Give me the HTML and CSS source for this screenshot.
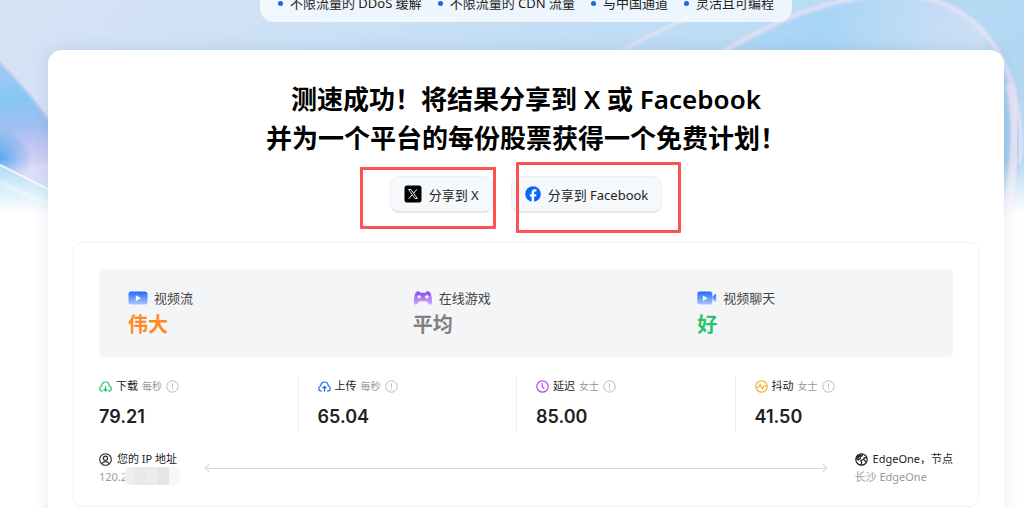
FILE: index.html
```html
<!DOCTYPE html>
<html lang="zh-CN">
<head>
  <meta charset="UTF-8" />
  <title>EdgeOne 测速</title>
  <meta name="viewport" content="width=device-width, initial-scale=1.0" />
  <link rel="stylesheet" href="styles.css">
</head>
<body>
  <div class="page">
    <svg class="hero-bg" viewBox="0 0 1024 220" preserveAspectRatio="none" aria-hidden="true">
      <defs>
        <linearGradient id="sky" x1="0" y1="0" x2="1" y2="0.2">
          <stop offset="0" stop-color="#d8e3f5" />
          <stop offset="0.35" stop-color="#cae0f5" />
          <stop offset="0.7" stop-color="#bddcf4" />
          <stop offset="1" stop-color="#b3d7f3" />
        </linearGradient>
        <linearGradient id="petal" x1="0" y1="60" x2="14" y2="190" gradientUnits="userSpaceOnUse">
          <stop offset="0" stop-color="#a9c8f3" />
          <stop offset="0.3" stop-color="#86c8f3" />
          <stop offset="0.52" stop-color="#a0bff2" />
          <stop offset="0.7" stop-color="#c6c8f3" />
          <stop offset="0.85" stop-color="#d9d6f4" />
          <stop offset="1" stop-color="#b5c8f3" />
        </linearGradient>
        <radialGradient id="glow" cx="0" cy="158" r="32" gradientUnits="userSpaceOnUse">
          <stop offset="0" stop-color="#5aaaee" />
          <stop offset="1" stop-color="#5aaaee" stop-opacity="0" />
        </radialGradient>
        <linearGradient id="arch" x1="720" y1="0" x2="1020" y2="60" gradientUnits="userSpaceOnUse">
          <stop offset="0" stop-color="#b2d8f5" />
          <stop offset="0.35" stop-color="#a8d5f5" />
          <stop offset="0.7" stop-color="#c4ddf5" />
          <stop offset="0.86" stop-color="#cddff5" />
          <stop offset="1" stop-color="#9fcdf1" />
        </linearGradient>
        <linearGradient id="fade" x1="0" y1="0" x2="0" y2="1">
          <stop offset="0" stop-color="#fff" stop-opacity="0" />
          <stop offset="0.9" stop-color="#fff" />
        </linearGradient>
        <filter id="soft" x="-20%" y="-20%" width="140%" height="140%">
          <feGaussianBlur stdDeviation="1.5" />
        </filter>
      </defs>
      <rect width="1024" height="220" fill="url(#sky)" />
      <path d="M0 60C16 76 34 96 60 132V196L0 166Z" fill="url(#petal)" />
      <path d="M0 120L60 180V196L0 166Z" fill="url(#glow)" />
      <path d="M0 60C16 76 34 96 60 132" fill="none" stroke="#e6def3" stroke-width="3" filter="url(#soft)" />
      <path d="M0 166L60 196V220H0Z" fill="#a9d9f6" />
      <path d="M0 165L60 195" stroke="#f3eef9" stroke-width="2" />
      <path d="M0 182L60 210" stroke="#d5effa" stroke-width="3" filter="url(#soft)" />
      <path d="M620 52C660 28 700 12 760 -8" fill="none" stroke="#e2e3f5" stroke-width="3" filter="url(#soft)" />
      <path d="M700 66C760 28 820 -3 892 -5C960 -5 990 32 1005 66C1018 98 1024 140 1019 164C1014 190 1012 205 1010 220H700Z" fill="url(#arch)" />
      <path d="M1010 84C1018 120 1016 160 1006 220" fill="none" stroke="#e3e2f6" stroke-width="9" filter="url(#soft)" />
      <path d="M700 66C760 28 820 -3 892 -5C960 -5 990 32 1005 66C1018 98 1024 140 1019 164" fill="none" stroke="#e6e1f4" stroke-width="4" filter="url(#soft)" />
      <rect y="160" width="1024" height="60" fill="url(#fade)" />
    </svg>

    <ul class="features">
      <li>不限流量的 DDoS 缓解</li>
      <li>不限流量的 CDN 流量</li>
      <li>与中国通道</li>
      <li>灵活且可编程</li>
    </ul>

    <main class="card">
      <h1>测速成功！将结果分享到 X 或 Facebook<br>并为一个平台的每份股票获得一个免费计划！</h1>

      <div class="share">
        <div class="share-item">
          <button type="button">
            <svg width="18" height="18" viewBox="0 0 18 18" aria-hidden="true">
              <rect x="0.5" y="0.5" width="17" height="17" rx="2.5" fill="#000" />
              <path d="M4.6 4.5H7L13.4 13.5H11Z" fill="none" stroke="#fff" stroke-width="0.9" />
              <path d="M13 4.3L9.7 8.1M8.2 9.8L4.8 13.7" stroke="#fff" stroke-width="1" />
            </svg>
            分享到 X
          </button>
          <span class="mark mark-x"></span>
        </div>
        <div class="share-item">
          <button type="button">
            <svg width="16" height="16" viewBox="0 0 16 16" aria-hidden="true">
              <circle cx="8" cy="8" r="7.8" fill="#0866ff" />
              <path d="M6.6 15.9V10.6H4.9V8.2H6.6V6.9C6.6 4.4 7.8 3.3 9.9 3.3C10.5 3.3 11.1 3.4 11.4 3.5V5.6H10.3C9.4 5.6 9.1 6 9.1 6.9V8.2H11.4L11 10.6H9.1V15.9Z" fill="#fff" />
            </svg>
            分享到 Facebook
          </button>
          <span class="mark mark-facebook"></span>
        </div>
      </div>

      <section class="panel">
        <div class="quality">
          <div>
            <div class="quality-name">
              <svg width="20" height="14" viewBox="0 0 20 14" aria-hidden="true">
                <defs>
                  <linearGradient id="blue" x1="0" y1="0" x2="0" y2="1">
                    <stop offset="0" stop-color="#2468f8" />
                    <stop offset="1" stop-color="#a9c6ff" />
                  </linearGradient>
                </defs>
                <rect x="0.5" y="0.5" width="19" height="13" rx="2.5" fill="url(#blue)" />
                <path d="M7.8 4.2V10.2L13 7.2Z" fill="#fff" />
              </svg>
              视频流
            </div>
            <div class="grade great">伟大</div>
          </div>
          <div>
            <div class="quality-name">
              <svg width="20" height="14" viewBox="0 0 20 14" aria-hidden="true">
                <defs>
                  <linearGradient id="purple" x1="0" y1="0" x2="0" y2="1">
                    <stop offset="0" stop-color="#8a45f5" />
                    <stop offset="1" stop-color="#cdb0fc" />
                  </linearGradient>
                </defs>
                <path d="M4.5 0.4C5.8 0.2 6.8 0.8 7.4 1.8H12.6C13.2 0.8 14.2 0.2 15.5 0.4C18 0.8 18.6 5 19 9.5C19.3 12.6 18.6 13.8 17.3 13.8C15.4 13.8 14.8 10.2 12.8 10.2H7.2C5.2 10.2 4.6 13.8 2.7 13.8C1.4 13.8 0.7 12.6 1 9.5C1.4 5 2 0.8 4.5 0.4Z" fill="url(#purple)" />
                <path d="M4.2 5.8H8M6.1 3.9V7.7" stroke="#fff" stroke-width="1.2" />
                <path d="M12 5.8H15.8M13.9 3.9V7.7" stroke="#fff" stroke-width="1.4" />
              </svg>
              在线游戏
            </div>
            <div class="grade average">平均</div>
          </div>
          <div>
            <div class="quality-name">
              <svg width="20" height="14" viewBox="0 0 20 14" aria-hidden="true">
                <path d="M15.5 5.6L18.2 3.2Q19.2 2.7 19.2 3.8V10.2Q19.2 11.3 18.2 10.8L15.5 8.4Z" fill="url(#blue)" />
                <rect x="0.3" y="0.5" width="15" height="13" rx="2.5" fill="url(#blue)" />
                <path d="M5.8 4.5V10L10.6 7.2Z" fill="#fff" />
              </svg>
              视频聊天
            </div>
            <div class="grade good">好</div>
          </div>
        </div>

        <div class="stats">
          <div class="stat">
            <div class="stat-name">
              <svg width="13" height="13" viewBox="0 0 13 13" fill="none" stroke="#22c064" stroke-width="1.2" aria-hidden="true">
                <path d="M4 11H3.2C1.7 11 0.7 9.8 0.7 8.5C0.7 7.2 1.6 6.2 2.8 6C2.8 3.5 4.4 2 6.5 2C8.6 2 10.2 3.5 10.2 6C11.4 6.2 12.3 7.2 12.3 8.5C12.3 9.8 11.3 11 9.8 11H9" />
                <path d="M6.5 6V11M4.6 9.2L6.5 11L8.4 9.2" />
              </svg>
              下载 <small>每秒</small>
              <svg class="info" width="13" height="13" viewBox="0 0 13 13" aria-hidden="true"><circle cx="6.5" cy="6.5" r="5.7" /><path d="M6.5 3.3V7.5M6.5 8.6V9.8" /></svg>
            </div>
            <div class="value">79.21</div>
          </div>
          <div class="stat">
            <div class="stat-name">
              <svg width="13" height="13" viewBox="0 0 13 13" fill="none" stroke="#1f65e8" stroke-width="1.2" aria-hidden="true">
                <path d="M4 11H3.2C1.7 11 0.7 9.8 0.7 8.5C0.7 7.2 1.6 6.2 2.8 6C2.8 3.5 4.4 2 6.5 2C8.6 2 10.2 3.5 10.2 6C11.4 6.2 12.3 7.2 12.3 8.5C12.3 9.8 11.3 11 9.8 11H9" />
                <path d="M6.5 11.5V6.5M4.6 8.3L6.5 6.5L8.4 8.3" />
              </svg>
              上传 <small>每秒</small>
              <svg class="info" width="13" height="13" viewBox="0 0 13 13" aria-hidden="true"><circle cx="6.5" cy="6.5" r="5.7" /><path d="M6.5 3.3V7.5M6.5 8.6V9.8" /></svg>
            </div>
            <div class="value">65.04</div>
          </div>
          <div class="stat">
            <div class="stat-name">
              <svg width="13" height="13" viewBox="0 0 13 13" fill="none" stroke="#b94df0" stroke-width="1.2" aria-hidden="true">
                <circle cx="6.5" cy="6.5" r="5.7" />
                <path d="M6.2 3.3V6.7L8.4 8.9" />
              </svg>
              延迟 <small>女士</small>
              <svg class="info" width="13" height="13" viewBox="0 0 13 13" aria-hidden="true"><circle cx="6.5" cy="6.5" r="5.7" /><path d="M6.5 3.3V7.5M6.5 8.6V9.8" /></svg>
            </div>
            <div class="value">85.00</div>
          </div>
          <div class="stat">
            <div class="stat-name">
              <svg width="13" height="13" viewBox="0 0 13 13" fill="none" stroke="#f3b536" stroke-width="1.2" aria-hidden="true">
                <circle cx="6.5" cy="6.5" r="5.7" />
                <path d="M1 7.5H3.4L5.2 4.2L7.4 8.8L9 6.2H12" />
              </svg>
              抖动 <small>女士</small>
              <svg class="info" width="13" height="13" viewBox="0 0 13 13" aria-hidden="true"><circle cx="6.5" cy="6.5" r="5.7" /><path d="M6.5 3.3V7.5M6.5 8.6V9.8" /></svg>
            </div>
            <div class="value">41.50</div>
          </div>
        </div>

        <div class="route">
          <div>
            <div class="route-name">
              <svg width="13" height="13" viewBox="0 0 13 13" fill="none" stroke="#222" stroke-width="1.1" aria-hidden="true">
                <circle cx="6.5" cy="6.5" r="5.8" />
                <circle cx="6.5" cy="5.2" r="2.1" />
                <path d="M2.8 10.8C3.4 9.2 4.8 8.6 6.5 8.6C8.2 8.6 9.6 9.2 10.2 10.8" />
              </svg>
              您的 IP 地址
            </div>
            <div class="route-detail">120.2<span class="mosaic"><i></i><i></i><i></i><i></i><i></i></span></div>
          </div>
          <div class="arrow"></div>
          <div>
            <div class="route-name">
              <svg width="13" height="13" viewBox="0 0 13 13" fill="none" stroke="#222" stroke-width="1.2" aria-hidden="true">
                <circle cx="6.5" cy="6.5" r="5.7" />
                <path d="M1 5.4L3.6 7L5.4 5.4L5.2 3.6L7.4 2.6L7 1M11.8 5L9.4 4.6L8.4 6.2L5.8 7.8L6.6 9.4L6.4 12M8.4 6.2L10.4 8.2L11.4 9" />
                <path d="M2 3.2L5 1.2L6.6 2.4L4.6 3.8L3.4 6L1.4 5Z" fill="#222" stroke="none" />
              </svg>
              EdgeOne，节点
            </div>
            <div class="route-detail">长沙 EdgeOne</div>
          </div>
        </div>
      </section>
    </main>
  </div>
</body>
</html>
```
FILE: styles.css
```css
* { box-sizing: border-box; }
body {
  margin: 0;
  font-family: "Noto Sans", "Noto Sans CJK SC", sans-serif;
  font-size: 13px;
  color: #222;
  background: #fff;
}
svg { flex: none; }
.page {
  position: relative;
  height: 100vh;
  overflow: hidden;
  padding: 0 20px 0 48px;
}
.hero-bg {
  position: absolute;
  top: 0;
  left: 0;
  width: 100%;
  height: 220px;
}

/* feature strip */
.features {
  position: relative;
  display: flex;
  gap: 16px;
  width: fit-content;
  margin: -7px auto 28px;
  padding: 0 18px 9px;
  list-style: none;
  line-height: 20px;
  background: rgba(250, 252, 255, 0.78);
  border-radius: 0 0 14px 14px;
}
.features li {
  display: flex;
  align-items: center;
  gap: 7px;
}
.features li::before {
  content: "";
  width: 5px;
  height: 5px;
  border-radius: 50%;
  background: #1c66e8;
}

.card {
  position: relative;
  padding: 30px 25px;
  background: #fff;
  border-radius: 14px;
  box-shadow: 0 0 16px rgba(60, 90, 150, 0.14);
}
h1 {
  margin: 0;
  font-size: 26px;
  line-height: 39px;
  font-weight: 600;
  color: #000;
  text-align: center;
}

/* share buttons */
.share {
  display: flex;
  justify-content: center;
  gap: 18px;
  margin: 18px 0 29px;
}
.share-item { position: relative; }
.share button {
  display: flex;
  align-items: center;
  gap: 7px;
  height: 37px;
  padding: 0 13px;
  border: 1px solid #edf1f5;
  border-bottom: 2px solid #e2e7ec;
  border-radius: 9px;
  background: #f5f9fc;
  font: inherit;
  color: #222;
  cursor: pointer;
}
.mark {
  position: absolute;
  border: 3px solid #fb5252;
  border-radius: 1px;
  pointer-events: none;
}
.mark-x { inset: -9px -3px -16px -30px; }
.mark-facebook { inset: -14px -19px -20px 5px; }

.panel {
  padding: 26px 25px 20px;
  border: 1px solid #f0f1f4;
  border-radius: 9px;
}
.quality {
  display: grid;
  grid-template-columns: repeat(3, 1fr);
  padding: 19px 0 15px;
  background: #f4f5f7;
  border-radius: 5px;
}
.quality > div { padding-left: 29px; }
.quality-name {
  display: flex;
  align-items: center;
  gap: 6px;
  line-height: 20px;
  color: #444;
}
.grade { font-size: 20px; line-height: 34px; font-weight: 700; }
.great { color: #ff8a1f; }
.average { color: #808080; }
.good { color: #2bc46d; }

/* measured values */
.stats { display: flex; margin-top: 20px; }
.stat { flex: 1; }
.stat + .stat { padding-left: 19px; border-left: 1px solid #eceef3; }
.stat-name {
  display: flex;
  align-items: center;
  gap: 4px;
  font-size: 11px;
  line-height: 18px;
}
.stat-name small { font-size: 10px; color: #999; }
.info { fill: none; stroke: #bbb; }
.value {
  margin-top: 8px;
  font-family: Inter, "Noto Sans", sans-serif;
  font-size: 18px;
  line-height: 28px;
  font-weight: 600;
}

.route {
  display: flex;
  align-items: center;
  gap: 28px;
  margin-top: 19px;
}
.route-name {
  display: flex;
  align-items: center;
  gap: 5px;
  font-size: 11px;
  line-height: 18px;
}
.route-detail {
  position: relative;
  font-size: 11px;
  line-height: 18px;
  color: #999;
}
.mosaic {
  position: absolute;
  left: 25px;
  top: -1px;
  display: flex;
  width: 56px;
  height: 18px;
  border-radius: 8px;
  overflow: hidden;
}
.mosaic i { flex: 1; background: #eeeeef; }
.mosaic i:nth-child(2) { background: #e8e8e9; }
.mosaic i:nth-child(3) { background: #ececec; }
.mosaic i:nth-child(4) { background: #e5e5e6; }
.mosaic i:nth-child(5) { background: #f6f7f9; }
.arrow {
  flex: 1;
  display: flex;
  align-items: center;
  justify-content: space-between;
  height: 7px;
  background: linear-gradient(#d5dae5, #d5dae5) center / 100% 1px no-repeat;
}
.arrow::before, .arrow::after {
  content: "";
  width: 5px;
  height: 5px;
  margin: 0 1px;
  border: solid #cdd3df;
  border-width: 0 0 1px 1px;
  transform: rotate(45deg);
}
.arrow::after { transform: rotate(225deg); }
```
